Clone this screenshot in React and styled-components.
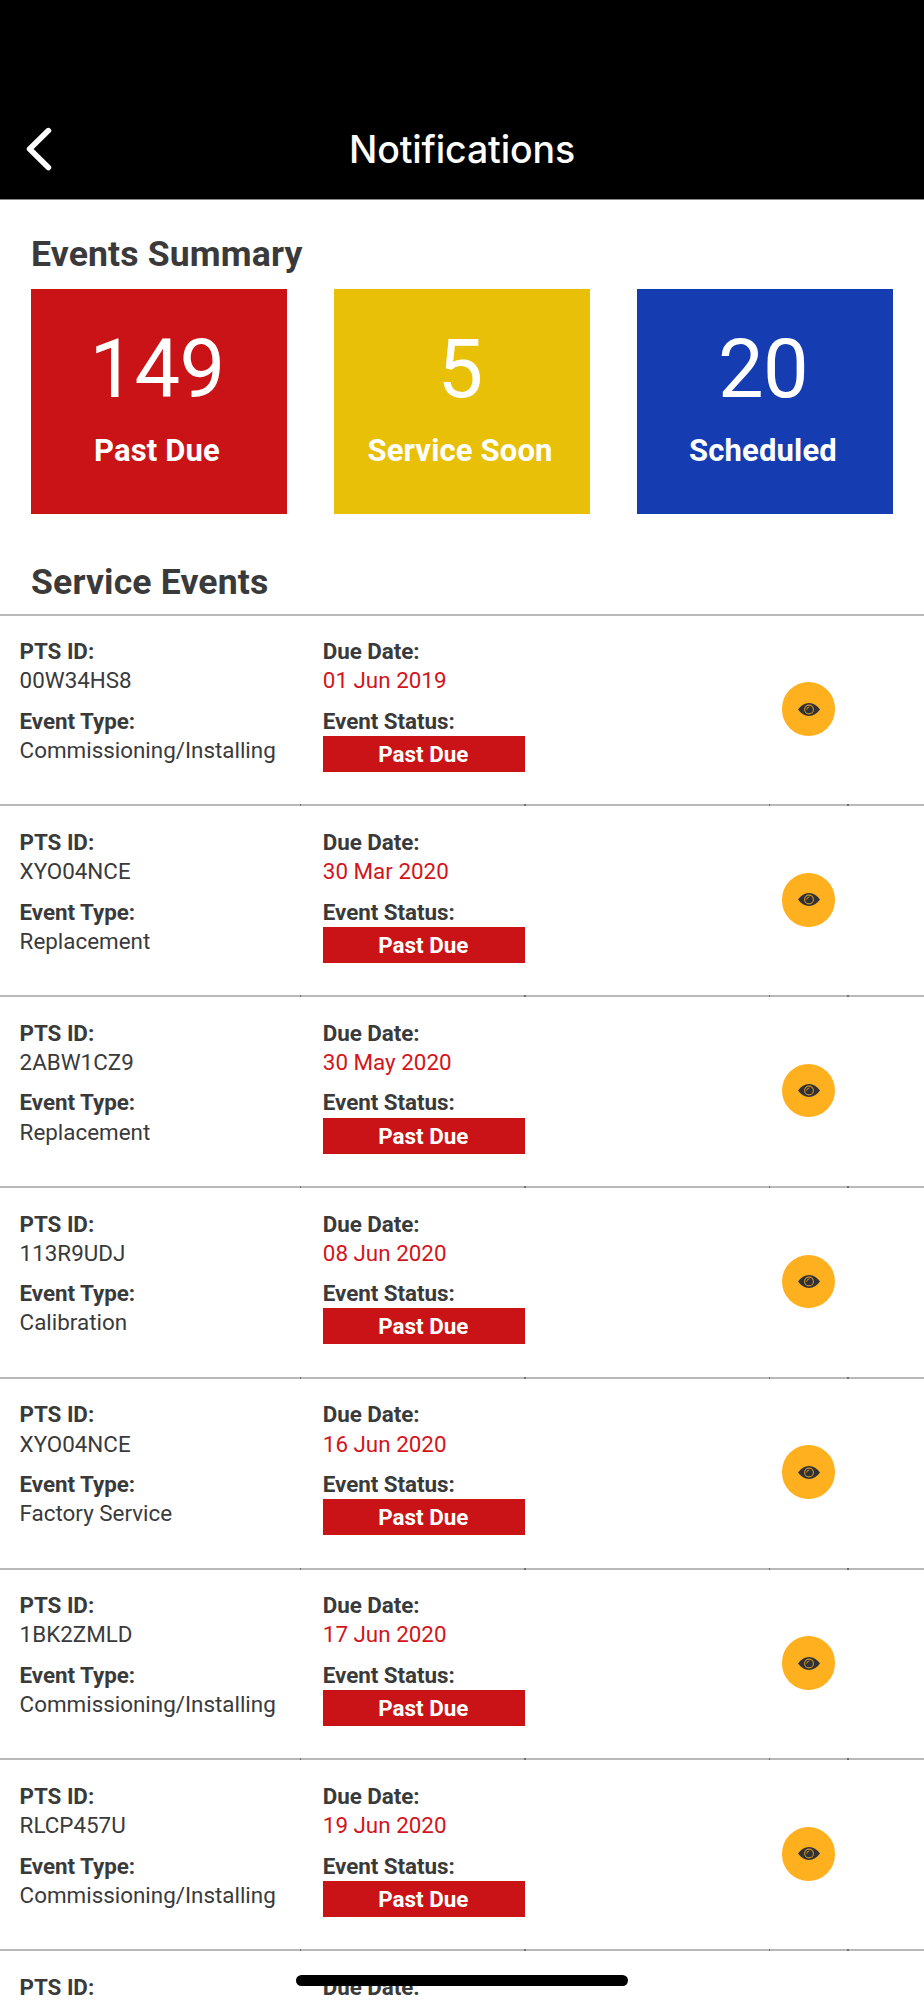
import React from "react";
import styled, { createGlobalStyle } from "styled-components";

const GlobalStyle = createGlobalStyle`
  * { box-sizing: border-box; }
  html, body { margin: 0; background: #fff; }
  body { height: 2000px; overflow: hidden; font-family: Roboto, sans-serif; color: #3a3a3b; }
`;

const Screen = styled.div`
  position: relative;
  display: flex;
  flex-direction: column;
  width: 924px;
  height: 2000px;
  overflow: hidden;
  background: #fff;
`;

const Header = styled.header`
  flex: none;
  height: 200px;
  padding: 100px 0 0;
  background: #000;
  border-bottom: 1px solid #8c8888;
  display: grid;
  grid-template-columns: 100px 1fr 100px;
  align-items: center;
`;

const BackButton = styled.button`
  border: 0;
  padding: 0 0 1px 23.5px;
  background: none;
  display: flex;
`;

const Title = styled.h1`
  margin: 0;
  padding-top: 1px;
  color: #fff;
  text-align: center;
  font: 500 37.5px/50px Inter, sans-serif;
  letter-spacing: -0.15px;
`;

const SectionTitle = styled.h2`
  margin: 0;
  padding-left: 31px;
  font-size: 35.6px;
  line-height: 44px;
  font-weight: 700;
  letter-spacing: 0.15px;
`;

const Summary = styled.section`
  flex: none;
  height: 360px;
  padding-top: 32px;
`;

const Cards = styled.div`
  display: grid;
  grid-template-columns: repeat(3, 256px);
  justify-content: space-between;
  padding: 0 31px;
  margin-top: 13px;
`;

const Card = styled.div`
  height: 224.5px;
  padding: 32px 4px 0 0;
  background: ${(p) => p.$color};
  color: #fff;
  text-align: center;
`;

const Count = styled.div`
  font-size: 81.3px;
  line-height: 98px;
  letter-spacing: -0.7px;
`;

const CardLabel = styled.div`
  margin-top: 14px;
  font-size: 31px;
  line-height: 36px;
  font-weight: 700;
  letter-spacing: 0.15px;
`;

const Events = styled.section`
  flex: none;
`;

const EventList = styled.div`
  margin-top: 9.7px;
`;

const EventRow = styled.article`
  display: grid;
  grid-template-columns: 300px 224.5px 244.5px 78.5px 1fr;
  height: 190.8px;
  border-top: 2px solid #b9b9b9;
`;

const Cell = styled.div`
  position: relative;
  padding: 21.6px 0 0 ${(p) => p.$indent || 0}px;
  white-space: nowrap;

  &::after {
    content: "";
    position: absolute;
    top: -2px;
    right: -1px;
    width: 1.5px;
    height: 2px;
    background: ${(p) => (p.$tick ? "#707070" : "transparent")};
  }
`;

const Field = styled.div`
  font-size: 22.4px;
  line-height: 29.2px;

  & + & { margin-top: 11.1px; }
`;

const FieldLabel = styled.div`
  font-weight: 700;
  letter-spacing: -0.05px;
`;

const FieldValue = styled.div`
  color: ${(p) => (p.$late ? "#d3151b" : "inherit")};
`;

const Badge = styled.div`
  width: 202px;
  height: 36px;
  padding-right: 1px;
  background: #c91316;
  color: #fff;
  font-weight: 700;
  line-height: 37px;
  text-align: center;
`;

const ViewCell = styled(Cell)`
  display: flex;
  justify-content: center;
  align-items: flex-start;
  padding: 66.6px 0 0 0.5px;
`;

const ViewButton = styled.button`
  flex: none;
  width: 53.5px;
  height: 53.5px;
  padding: 0;
  border: 0;
  border-radius: 50%;
  background: #ffb01f;
  display: flex;
  align-items: center;
  justify-content: center;
`;

const HomeIndicator = styled.div`
  position: absolute;
  left: 296px;
  top: 1975px;
  width: 332px;
  height: 11px;
  border-radius: 6px;
  background: #000;
`;

const Chevron = () => (
  <svg width="30" height="46" viewBox="0 0 30 46" fill="none">
    <path d="M24.4 4.6 5.6 23.1 24.4 41.6" stroke="#fff" strokeWidth="5.6" strokeLinecap="round" strokeLinejoin="round" />
  </svg>
);

const Eye = () => (
  <svg width="22" height="13" viewBox="0 0 22 13">
    <path d="M0 6.5C3 2.2 6.7 0 11 0S19 2.2 22 6.5C19 10.8 15.3 13 11 13S3 10.8 0 6.5Z" fill="#2f3136" />
    <circle cx="11" cy="6.5" r="4.4" fill="none" stroke="#c9922a" strokeWidth="1.1" />
    <path d="M8.7 6.2A2.4 2.4 0 0 1 11 4" fill="none" stroke="#c9922a" strokeWidth="1" strokeLinecap="round" />
  </svg>
);

const summary = [
  { count: 149, label: "Past Due", color: "#c91316" },
  { count: 5, label: "Service Soon", color: "#e8c008" },
  { count: 20, label: "Scheduled", color: "#153db1" },
];

const events = [
  ["00W34HS8", "Commissioning/Installing", "01 Jun 2019"],
  ["XYO04NCE", "Replacement", "30 Mar 2020"],
  ["2ABW1CZ9", "Replacement", "30 May 2020"],
  ["113R9UDJ", "Calibration", "08 Jun 2020"],
  ["XYO04NCE", "Factory Service", "16 Jun 2020"],
  ["1BK2ZMLD", "Commissioning/Installing", "17 Jun 2020"],
  ["RLCP457U", "Commissioning/Installing", "19 Jun 2020"],
];

function ServiceEvent({ id, type, due, first }) {
  return (
    <EventRow>
      <Cell $indent={19.6} $tick={!first}>
        <Field>
          <FieldLabel>PTS ID:</FieldLabel>
          <FieldValue>{id}</FieldValue>
        </Field>
        {type && (
          <Field>
            <FieldLabel>Event Type:</FieldLabel>
            <FieldValue>{type}</FieldValue>
          </Field>
        )}
      </Cell>
      <Cell $indent={22.8} $tick={!first}>
        <Field>
          <FieldLabel>Due Date:</FieldLabel>
          <FieldValue $late>{due}</FieldValue>
        </Field>
        {type && (
          <Field>
            <FieldLabel>Event Status:</FieldLabel>
            <Badge>Past Due</Badge>
          </Field>
        )}
      </Cell>
      <Cell $tick={!first} />
      <ViewCell $tick={!first}>
        {type && (
          <ViewButton aria-label="View event">
            <Eye />
          </ViewButton>
        )}
      </ViewCell>
    </EventRow>
  );
}

export default function App() {
  return (
    <Screen>
      <GlobalStyle />
      <Header>
        <BackButton aria-label="Back">
          <Chevron />
        </BackButton>
        <Title>Notifications</Title>
      </Header>
      <Summary>
        <SectionTitle>Events Summary</SectionTitle>
        <Cards>
          {summary.map((s) => (
            <Card key={s.label} $color={s.color}>
              <Count>{s.count}</Count>
              <CardLabel>{s.label}</CardLabel>
            </Card>
          ))}
        </Cards>
      </Summary>
      <Events>
        <SectionTitle>Service Events</SectionTitle>
        <EventList>
          {events.map(([id, type, due], i) => (
            <ServiceEvent key={i} id={id} type={type} due={due} first={i === 0} />
          ))}
          <ServiceEvent />
        </EventList>
      </Events>
      <HomeIndicator />
    </Screen>
  );
}
